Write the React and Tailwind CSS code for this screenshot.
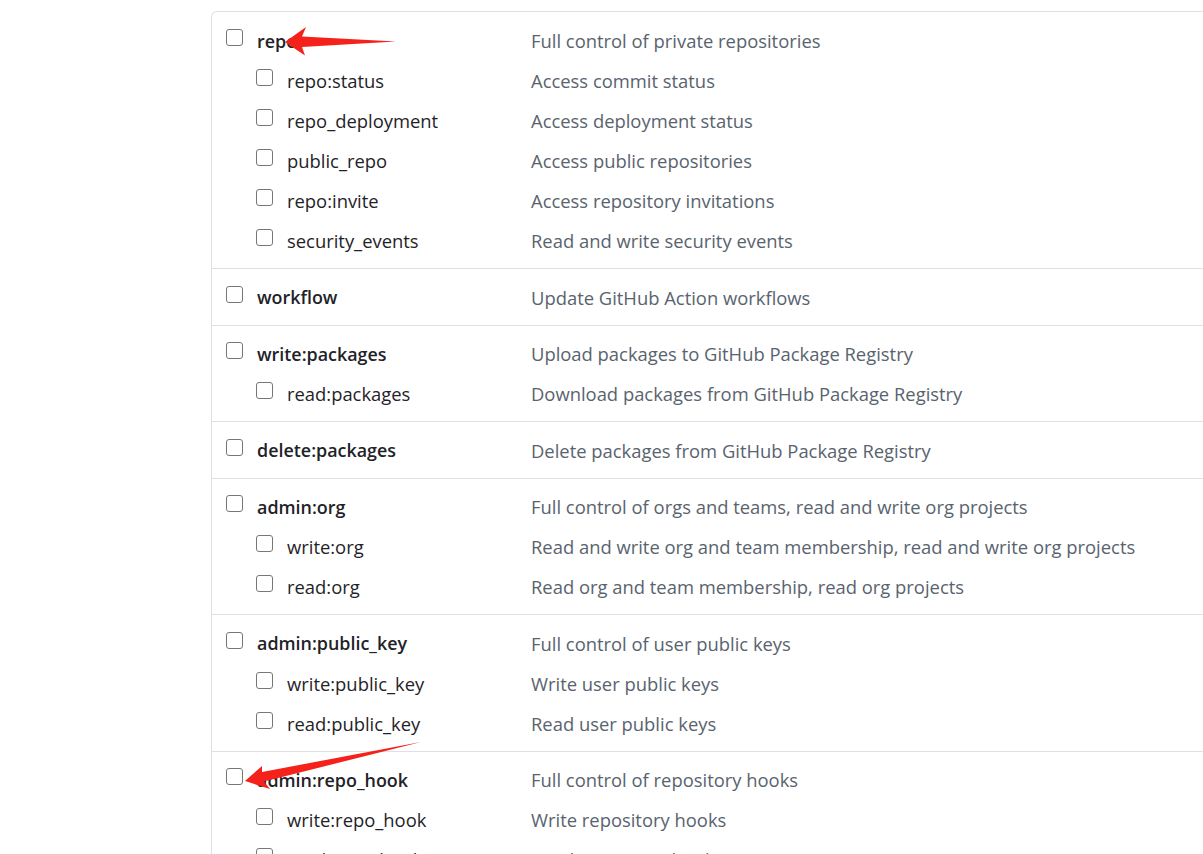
import React from 'react';

const GROUPS = [
  {
    name: 'repo', desc: 'Full control of private repositories',
    children: [
      ['repo:status', 'Access commit status'],
      ['repo_deployment', 'Access deployment status'],
      ['public_repo', 'Access public repositories'],
      ['repo:invite', 'Access repository invitations'],
      ['security_events', 'Read and write security events'],
    ],
  },
  { name: 'workflow', desc: 'Update GitHub Action workflows', children: [] },
  {
    name: 'write:packages', desc: 'Upload packages to GitHub Package Registry',
    children: [['read:packages', 'Download packages from GitHub Package Registry']],
  },
  { name: 'delete:packages', desc: 'Delete packages from GitHub Package Registry', children: [] },
  {
    name: 'admin:org', desc: 'Full control of orgs and teams, read and write org projects',
    children: [
      ['write:org', 'Read and write org and team membership, read and write org projects'],
      ['read:org', 'Read org and team membership, read org projects'],
    ],
  },
  {
    name: 'admin:public_key', desc: 'Full control of user public keys',
    children: [
      ['write:public_key', 'Write user public keys'],
      ['read:public_key', 'Read user public keys'],
    ],
  },
  {
    name: 'admin:repo_hook', desc: 'Full control of repository hooks',
    children: [
      ['write:repo_hook', 'Write repository hooks'],
      ['read:repo_hook', 'Read repository hooks'],
    ],
  },
];

function Box() {
  return <span className="block w-[17px] h-[17px] mb-[6px] shrink-0 rounded-[3px] border-[1.5px] border-[#767676] bg-white" />;
}

function Row({ name, desc, child }) {
  return (
    <div className="flex items-center h-10">
      <div className={`flex items-center w-[305px] shrink-0 ${child ? 'pl-[30px]' : ''}`}>
        <Box />
        <span className={`ml-[14px] text-[#1f2328] ${child ? 'text-[18.4px]' : 'text-[17.9px] font-semibold'}`}>{name}</span>
      </div>
      <span className="text-[18.4px] text-[#59636e] whitespace-nowrap">{desc}</span>
    </div>
  );
}

export default function App() {
  return (
    <div className="relative w-full h-[854px] overflow-hidden bg-white" style={{ fontFamily: '"Open Sans", "Noto Sans", sans-serif' }}>
      <div className="ml-[211px] mt-[11px] w-[1100px] border-t border-l border-[#dde1e6] rounded-tl-md">
        {GROUPS.map((g, i) => (
          <div key={g.name} className={`pl-[14px] pb-[7px] ${i ? 'pt-[8.5px] border-t border-[#dde1e6]' : 'pt-[9px]'}`}>
            <Row name={g.name} desc={g.desc} />
            {g.children.map(([n, d]) => <Row key={n} name={n} desc={d} child />)}
          </div>
        ))}
      </div>

      {/* annotation arrows */}
      <svg className="absolute inset-0 pointer-events-none" width="1203" height="854">
        <polygon fill="#f5211b" points="285,42 306,27 302,36.5 396,41.5 302,47 305,55.5" />
        <polygon fill="#f5211b" points="245,781 262,766 262,772 421,742 264,781.5 270,789" />
      </svg>
    </div>
  );
}
